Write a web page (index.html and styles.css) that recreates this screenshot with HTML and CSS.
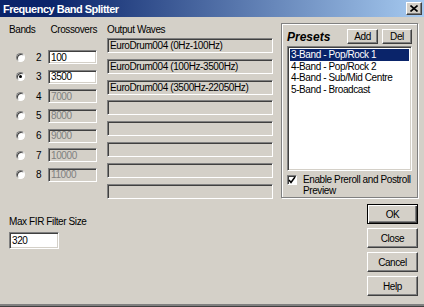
FILE: index.html
```html
<!DOCTYPE html>
<html>
<head>
<meta charset="utf-8">
<link rel="stylesheet" href="styles.css">
</head>
<body>
<div class="window">
  <div class="titlebar">
    <span class="title">Frequency Band Splitter</span>
    <span class="close"><svg width="8" height="7" viewBox="0 0 8 7"><path d="M0.5 0.5 L7.5 6.5 M7.5 0.5 L0.5 6.5" stroke="#000" stroke-width="1.6" fill="none"/></svg></span>
  </div>
  <div class="content">
    <div class="left">
      <div class="cols">
        <div class="bands">
          <div class="hdr"><span class="h-bands">Bands</span><span class="h-cross">Crossovers</span></div>
          <div class="rows">
            <div class="row"><span class="radio"></span><span class="num">2</span><span class="field white">100</span></div>
            <div class="row"><span class="radio checked"></span><span class="num">3</span><span class="field white">3500</span></div>
            <div class="row"><span class="radio"></span><span class="num">4</span><span class="field disabled">7000</span></div>
            <div class="row"><span class="radio"></span><span class="num">5</span><span class="field disabled">8000</span></div>
            <div class="row"><span class="radio"></span><span class="num">6</span><span class="field disabled">9000</span></div>
            <div class="row"><span class="radio"></span><span class="num">7</span><span class="field disabled">10000</span></div>
            <div class="row"><span class="radio"></span><span class="num">8</span><span class="field disabled">11000</span></div>
          </div>
        </div>
        <div class="waves">
          <div class="hdr">Output Waves</div>
          <div class="wave-list">
            <div class="field wave">EuroDrum004 (0Hz-100Hz)</div>
            <div class="field wave">EuroDrum004 (100Hz-3500Hz)</div>
            <div class="field wave">EuroDrum004 (3500Hz-22050Hz)</div>
            <div class="field wave"></div>
            <div class="field wave"></div>
            <div class="field wave"></div>
            <div class="field wave"></div>
            <div class="field wave"></div>
          </div>
        </div>
      </div>
      <div class="fir">
        <div class="fir-label">Max FIR Filter Size</div>
        <div class="field white fir-field">320</div>
      </div>
    </div>
    <div class="right">
      <div class="group">
        <div class="group-head">
          <span class="presets">Presets</span>
          <span class="btn add">Add</span>
          <span class="btn del">Del</span>
        </div>
        <div class="list">
          <div class="item selected">3-Band - Pop/Rock 1</div>
          <div class="item">4-Band - Pop/Rock 2</div>
          <div class="item">4-Band - Sub/Mid Centre</div>
          <div class="item">5-Band - Broadcast</div>
        </div>
        <div class="check">
          <span class="box"><svg width="8" height="8" viewBox="0 0 8 8"><path d="M1 4 L3 6.5 L7 1" stroke="#000" stroke-width="1.5" fill="none"/></svg></span>
          <span class="check-text">Enable Preroll and Postroll Preview</span>
        </div>
      </div>
      <div class="buttons">
        <span class="btn big default">OK</span>
        <span class="btn big">Close</span>
        <span class="btn big">Cancel</span>
        <span class="btn big">Help</span>
      </div>
    </div>
  </div>
</div>
</body>
</html>
```
FILE: styles.css
```css
html, body {
  margin: 0;
  padding: 0;
}
.window {
  width: 424px;
  height: 307px;
  box-sizing: border-box;
  background: #d4d0c8;
  display: flex;
  flex-direction: column;
  font-family: "Liberation Sans", Arial, sans-serif;
  font-size: 10px;
  letter-spacing: -0.4px;
  color: #000;
  border-bottom: 1px solid #404040;
  box-shadow: inset 0 -2px #808080;
  overflow: hidden;
}
.titlebar {
  height: 17px;
  flex: none;
  display: flex;
  align-items: center;
  padding: 0 2px 0 3px;
  background: linear-gradient(90deg, #0a246a 0%, #0a246a 12%, #a6caf0 100%);
}
.title {
  color: #fff;
  font-weight: bold;
  font-size: 11px;
  letter-spacing: -0.5px;
}
.close {
  margin-left: auto;
  width: 16px;
  height: 13px;
  box-sizing: border-box;
  background: #d4d0c8;
  border: 1px solid;
  border-color: #fff #404040 #404040 #fff;
  box-shadow: inset -1px -1px #808080;
  display: flex;
  align-items: center;
  justify-content: center;
}
.close svg { display: block; }
.content {
  flex: 1;
  display: flex;
  gap: 8px;
  padding: 6px 6px 0 9px;
}
.left {
  width: 264px;
  padding-top: 1px;
}
.cols {
  display: flex;
  gap: 10px;
}
.bands {
  width: 88px;
}
.hdr {
  height: 12px;
  line-height: 12px;
  white-space: nowrap;
}
.bands .hdr {
  display: flex;
}
.h-bands {
  width: 43px;
}
.rows {
  margin-top: 14px;
  display: flex;
  flex-direction: column;
  gap: 5.67px;
}
.row {
  display: flex;
  align-items: center;
  height: 14px;
}
.radio {
  width: 9px;
  height: 9px;
  box-sizing: border-box;
  margin-left: 7px;
  border-radius: 50%;
  background: #fff;
  border: 1px solid;
  border-color: #808080 #fff #fff #808080;
  box-shadow: inset 1px 1px #404040;
  position: relative;
}
.radio.checked::after {
  content: "";
  position: absolute;
  left: 2px;
  top: 2px;
  width: 3px;
  height: 3px;
  border-radius: 50%;
  background: #000;
}
.num {
  width: 12px;
  margin-left: 11px;
}
.field {
  box-sizing: border-box;
  border: 1px solid;
  border-color: #808080 #fff #fff #808080;
  box-shadow: inset 1px 1px #404040, inset -1px -1px #d4d0c8;
  padding-left: 2px;
  white-space: nowrap;
  overflow: hidden;
  display: flex;
  align-items: center;
}
.row .field {
  width: 49px;
  height: 14px;
}
.field.white {
  background: #fff;
}
.field.disabled {
  background: #d4d0c8;
  color: #808080;
}
.waves {
  width: 166px;
}
.waves .hdr {
  margin-bottom: 2px;
}
.wave-list {
  display: flex;
  flex-direction: column;
  gap: 5.8px;
}
.wave {
  height: 15px;
  background: #d4d0c8;
}
.fir {
  margin-top: 17px;
}
.fir-label {
  height: 12px;
  line-height: 12px;
}
.fir-field {
  margin-top: 4.5px;
  width: 50px;
  height: 17px;
}
.right {
  width: 137px;
}
.group {
  width: 137px;
  height: 175px;
  box-sizing: border-box;
  border: 1px solid #808080;
  box-shadow: inset 1px 1px #fff, 1px 1px #fff;
  padding: 5px 5px 0 5px;
}
.group-head {
  display: flex;
  align-items: center;
  height: 15px;
}
.presets {
  flex: 1;
  font-weight: bold;
  font-style: italic;
  font-size: 12px;
  letter-spacing: 0;
}
.btn {
  box-sizing: border-box;
  background: #d4d0c8;
  border: 1px solid;
  border-color: #fff #404040 #404040 #fff;
  box-shadow: inset -1px -1px #808080;
  display: flex;
  align-items: center;
  justify-content: center;
}
.add {
  width: 31px;
  height: 15px;
}
.del {
  width: 30px;
  height: 15px;
  margin-left: 4px;
}
.list {
  margin-top: 2px;
  height: 125px;
  box-sizing: border-box;
  background: #fff;
  border: 1px solid;
  border-color: #808080 #fff #fff #808080;
  box-shadow: inset 1px 1px #404040, inset -1px -1px #d4d0c8;
  padding: 2px 2px 0 2px;
}
.item {
  height: 11.5px;
  line-height: 11.5px;
  padding-left: 1px;
  white-space: nowrap;
}
.item.selected {
  background: #0a246a;
  color: #fff;
}
.check {
  margin-top: 3px;
  display: flex;
  align-items: flex-start;
}
.box {
  flex: none;
  width: 10px;
  height: 10px;
  box-sizing: border-box;
  background: #fff;
  border: 1px solid;
  border-color: #808080 #fff #fff #808080;
  box-shadow: inset 1px 1px #404040;
  display: flex;
  align-items: center;
  justify-content: center;
  margin-top: 1px;
}
.box svg { display: block; }
.check-text {
  margin-left: 6px;
  line-height: 11px;
}
.buttons {
  margin-top: 6px;
  display: flex;
  flex-direction: column;
  align-items: flex-end;
  gap: 4px;
}
.big {
  width: 51px;
  height: 20px;
}
.btn.default {
  border-color: #000;
  box-shadow: inset 1px 1px #fff, inset -1px -1px #404040, inset -2px -2px #808080;
}
```
